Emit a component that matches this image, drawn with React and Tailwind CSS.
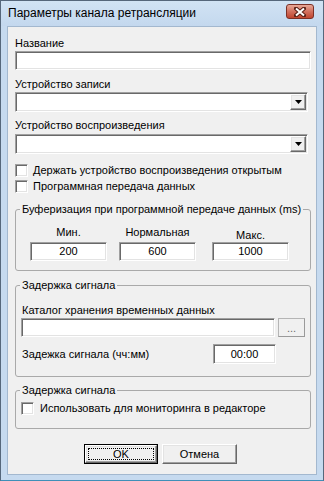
import React from "react"

const font = "font-['Liberation_Sans',Arial,sans-serif]"

const sunken =
  "bg-white border border-t-[#a0a0a0] border-l-[#a0a0a0] border-b-white border-r-white shadow-[inset_1px_1px_0_#696969,inset_-1px_-1px_0_#e3e3e3]"

const raised =
  "bg-[#f0f0f0] border border-t-white border-l-white border-b-[#696969] border-r-[#696969] shadow-[inset_-1px_-1px_0_#a0a0a0,inset_1px_1px_0_#e3e3e3]"

function Field({ className = "", value }) {
  return (
    <div className={`${sunken} ${className} flex items-center justify-center text-[11px] leading-[13px]`}>
      {value}
    </div>
  )
}

function Combo() {
  return (
    <div className={`${sunken} w-[293px] h-[20px] flex justify-end p-px`}>
      <div className={`${raised} w-[16px] h-[16px] flex items-center justify-center`}>
        <svg width="7" height="4" viewBox="0 0 7 4">
          <path d="M0 0h7L3.5 4z" fill="#000" />
        </svg>
      </div>
    </div>
  )
}

function Check() {
  return <div className={`${sunken} w-[13px] h-[13px] shrink-0`} />
}

function Group({ title, className = "", children }) {
  return (
    <fieldset className={`border border-[#a9a9a9] rounded-[3px] ${className}`}>
      <legend className="ml-[4px] px-[2px] leading-[13px]">{title}</legend>
      {children}
    </fieldset>
  )
}

export default function App() {
  return (
    <div className={`${font} w-[324px] h-[481px] bg-[#c6daef] border border-[#56677b] border-b-[#3f8fb8] flex flex-col text-black`}>
      <div className="h-[25px] flex shrink-0 bg-gradient-to-b from-[#d1e3f4] to-[#c4d8ee]">
        <div className="pl-[7px] text-[12px] leading-[25px]">Параметры канала ретрансляции</div>
        <div className="ml-auto mr-[9px] mt-[3px] w-[28px] h-[15px] rounded-[3px] border border-[#7c3026] bg-gradient-to-b from-[#e8a898] via-[#d2705e] to-[#c0442e] flex items-center justify-center">
          <svg width="12" height="10" viewBox="0 0 12 10">
            <path d="M2 1.5l8 7M10 1.5l-8 7" stroke="#5b2117" strokeWidth="4" strokeLinecap="square" />
            <path d="M2 1.5l8 7M10 1.5l-8 7" stroke="#fff" strokeWidth="2" />
          </svg>
        </div>
      </div>

      <div className="flex-1 mx-[6px] mb-[5px] border border-[#a3b8cf] bg-[#f0f0f0] pl-[7px] pr-[5px] text-[11px] flex flex-col">
        <div className="mt-[10px] leading-[13px]">Название</div>
        <Field className="mt-[1px] h-[19px] w-full" />

        <div className="mt-[8px] leading-[13px]">Устройство записи</div>
        <div className="mt-[1px]"><Combo /></div>

        <div className="mt-[7px] leading-[13px]">Устройство воспроизведения</div>
        <div className="mt-[2px]"><Combo /></div>

        <div className="mt-[10px] h-[13px] flex items-center">
          <Check />
          <span className="ml-[5px] leading-[13px]">Держать устройство воспроизведения открытым</span>
        </div>
        <div className="mt-[3px] h-[13px] flex items-center">
          <Check />
          <span className="ml-[5px] leading-[13px]">Программная передача данных</span>
        </div>

        <Group title="Буферизация при программной передаче данных (ms)" className="mt-[10px] pb-[9px]">
          <div className="flex pl-[14px]">
            <div className="w-[77px] flex flex-col items-center">
              <div className="mt-[10px] leading-[13px]">Мин.</div>
              <Field className="mt-[3px] h-[19px] w-full" value="200" />
            </div>
            <div className="ml-[12px] w-[77px] flex flex-col items-center">
              <div className="mt-[10px] leading-[13px]">Нормальная</div>
              <Field className="mt-[3px] h-[19px] w-full" value="600" />
            </div>
            <div className="ml-[16px] w-[77px] flex flex-col items-center">
              <div className="mt-[13px] leading-[13px]">Макс.</div>
              <Field className="h-[19px] w-full" value="1000" />
            </div>
          </div>
        </Group>

        <Group title="Задержка сигнала" className="mt-[8px] pb-[12px]">
          <div className="mt-[12px] pl-[6px] leading-[13px]">Каталог хранения временных данных</div>
          <div className="mt-[1px] pl-[5px] flex">
            <Field className="w-[254px] h-[19px]" />
            <div className="ml-[3px] w-[27px] h-[19px] border border-[#b5b5b5] border-b-[#9a9a9a] border-r-[#9a9a9a] bg-[#f0f0f0] flex items-end justify-center text-[#6d6d6d] leading-[13px] pb-[1px]">
              ...
            </div>
          </div>
          <div className="mt-[7px] h-[20px] flex items-center pl-[6px]">
            <span className="leading-[13px]">Задежка сигнала (чч:мм)</span>
            <Field className="ml-auto mr-[34px] w-[63px] h-[20px]" value="00:00" />
          </div>
        </Group>

        <Group title="Задержка сигнала" className="mt-[7px] pb-[13px]">
          <div className="mt-[5px] pl-[5px] h-[13px] flex items-center">
            <Check />
            <span className="ml-[6px] leading-[13px]">Использовать для мониторинга в редакторе</span>
          </div>
        </Group>

        <div className="mt-[15px] flex">
          <div className="ml-[69px] w-[74px] h-[20px] border border-black">
            <div className={`${raised} w-full h-full p-[2px]`}>
              <div className="w-full h-full border border-dotted border-black flex items-center justify-center leading-[13px]">
                OK
              </div>
            </div>
          </div>
          <div className={`${raised} ml-[4px] w-[75px] h-[20px] flex items-center justify-center leading-[13px]`}>
            Отмена
          </div>
        </div>
      </div>
    </div>
  )
}
